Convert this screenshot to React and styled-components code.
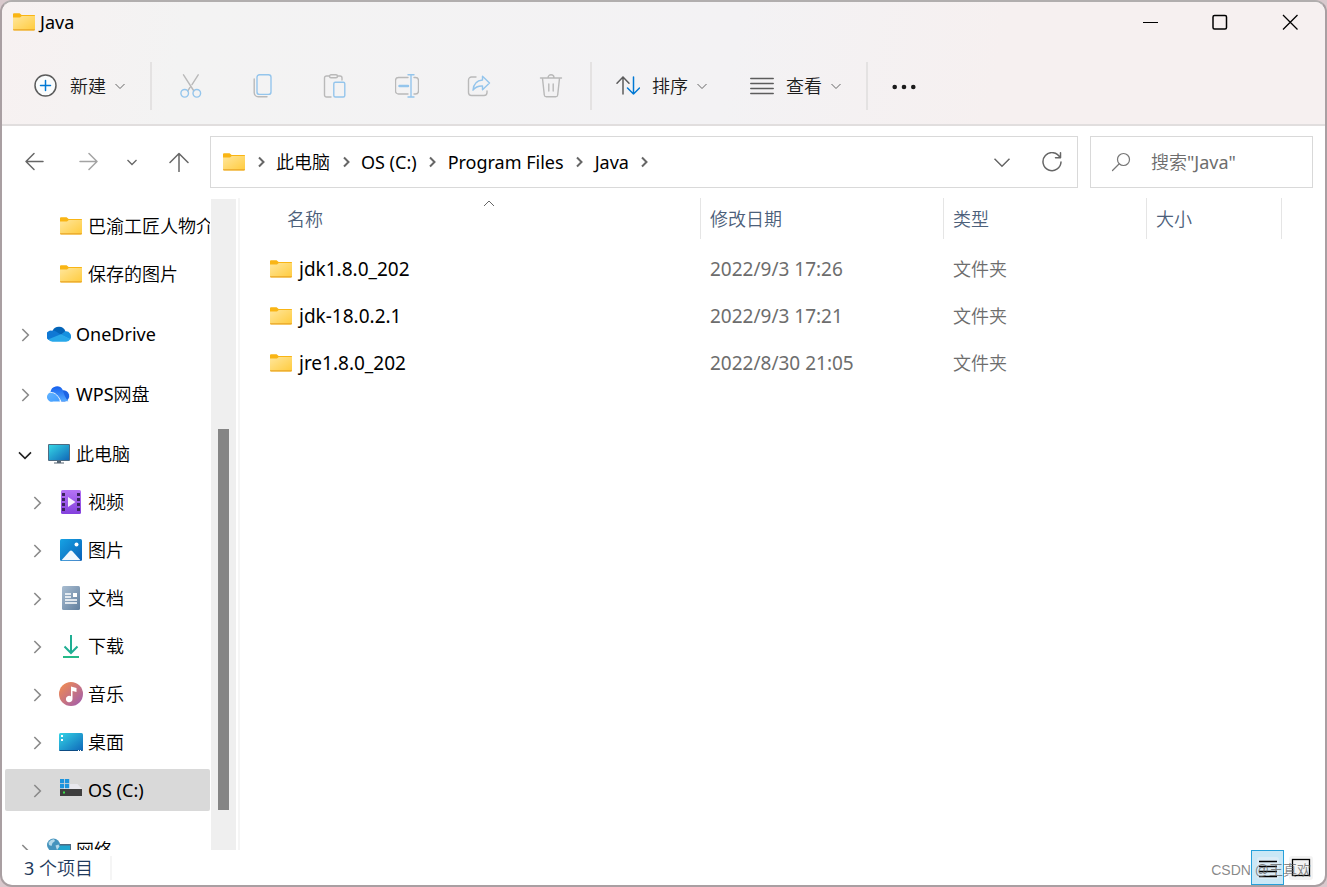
import React, { useId } from 'react'
import styled, { createGlobalStyle, css } from 'styled-components'

const GlobalStyle = createGlobalStyle`
	* {
		box-sizing: border-box;
	}
	body {
		margin: 0;
		background: #d9c9cd;
		font-family: 'Noto Sans', 'Noto Sans CJK SC DemiLight', 'Noto Sans CJK SC Light', 'Noto Sans CJK SC', sans-serif;
		font-size: 18px;
		line-height: 24px;
		color: #000;
	}
	button,
	input {
		font: inherit;
		color: inherit;
		border: 0;
		padding: 0;
		margin: 0;
		background: none;
	}
	svg {
		display: block;
		flex: none;
	}
`
const Window = styled.div`
	position: relative;
	display: flex;
	flex-direction: column;
	height: 100vh;
	overflow: hidden;
	border: 2px solid #a99fa2;
	border-top-color: #b1aeae;
	border-radius: 12px;
	background: #fff;
`
const Head = styled.header`
	flex: none;
	background: linear-gradient(100deg, #f7f1f1 0%, #f3f3f3 14%, #f3f2f4 55%, #f6f0f0 75%);
	border-bottom: 2px solid #e1dede;
`
const TitleBar = styled.div`
	display: flex;
	align-items: center;
	height: 40px;
	padding-left: 11px;
	margin-bottom: 6px;
`
const Title = styled.h1`
	flex: 1;
	margin: 0 0 0 5px;
	font-size: 18px;
	font-weight: 400;
`
const CaptionButton = styled.button`
	display: flex;
	align-items: center;
	justify-content: center;
	width: 70px;
	height: 40px;
`
const ToolBar = styled.div`
	display: flex;
	align-items: center;
	height: 76px;
	padding-left: 11px;
`
const ToolButton = styled.button`
	display: flex;
	align-items: center;
	gap: 12px;
	height: 48px;
	padding: 0 21px;
	color: #1b1b1b;
`
const IconButton = styled.button`
	display: flex;
	align-items: center;
	justify-content: center;
	width: 72px;
	height: 48px;
`
const ToolLabel = styled.span`
	display: flex;
	align-items: center;
	gap: 8px;
`
const Separator = styled.span`
	width: 2px;
	height: 48px;
	margin: 0 3px;
	background: #e4e2e2;
`
const NavRow = styled.div`
	display: flex;
	flex: none;
	padding: 10px 12px 10px 0;
`
const NavButtons = styled.nav`
	display: flex;
	align-items: center;
	width: 208px;
	padding-left: 5px;
`
const NavButton = styled.button`
	display: flex;
	align-items: center;
	justify-content: center;
	width: ${(props) => (props.$narrow ? '34px' : '54px')};
	height: 52px;
	&:last-child {
		margin-left: 3px;
	}
`
const AddressBar = styled.div`
	display: flex;
	align-items: center;
	flex: 1;
	height: 52px;
	padding-left: 12px;
	border: 1px solid #d9d9d9;
`
const Crumbs = styled.ol`
	display: flex;
	align-items: center;
	flex: 1;
	margin: 0;
	padding: 0;
	list-style: none;
`
const Crumb = styled.li`
	display: flex;
	align-items: center;
`
const CrumbLink = styled.a`
	color: #000;
	text-decoration: none;
	white-space: nowrap;
`
const CrumbArrow = styled.span`
	display: flex;
	justify-content: center;
	width: 31px;
`
const AddressButton = styled.button`
	display: flex;
	align-items: center;
	justify-content: center;
	width: 50px;
	height: 50px;
`
const SearchBox = styled.label`
	display: flex;
	align-items: center;
	gap: 20px;
	width: 223px;
	height: 52px;
	margin-left: 12px;
	padding-left: 20px;
	border: 1px solid #d9d9d9;
`
const SearchInput = styled.input`
	flex: 1;
	min-width: 0;
	outline: 0;
	&::placeholder {
		color: #6d6d6d;
		opacity: 1;
	}
`
const Body = styled.div`
	display: flex;
	flex: 1;
	min-height: 0;
`
const Sidebar = styled.aside`
	flex: none;
	width: 208px;
	padding: 4px 0 0 3px;
	overflow: hidden;
`
const Tree = styled.ul`
	margin: 0;
	padding: 0;
	list-style: none;
`
const TreeItem = styled.li`
	height: 48px;
	padding: 3px 0;
	margin-top: ${(props) => (props.$root ? '12px' : '0')};
`
const TreeRow = styled.div`
	display: flex;
	align-items: center;
	height: 42px;
	padding-left: ${(props) => (props.$root ? '8px' : '20px')};
	border-radius: 2px;
	white-space: nowrap;
	${(props) =>
		props.$selected &&
		css`
			background: #d9d9d9;
		`}
`
const Expander = styled.button`
	display: flex;
	flex: none;
	align-items: center;
	justify-content: center;
	width: 23px;
	height: 24px;
	margin: 2px 11px 0 0;
`
const ExpanderSpace = styled.span`
	flex: none;
	width: 34px;
`
const TreeLink = styled.a`
	display: flex;
	flex: none;
	align-items: center;
	gap: 5px;
	color: #000;
	text-decoration: none;
`
const TreeIcon = styled.span`
	display: flex;
	justify-content: center;
	width: 24px;
`
const ScrollTrack = styled.div`
	flex: none;
	display: flex;
	flex-direction: column;
	align-items: center;
	width: 25px;
	margin: 1px 2px 0 1px;
	padding: 230px 0 40px;
	background: #efefef;
`
const ScrollThumb = styled.div`
	flex: 1;
	width: 11px;
	background: #858585;
`
const Content = styled.main`
	flex: 1;
	min-width: 0;
	border-left: 2px solid #f5f5f5;
	overflow: hidden;
`
const FileTable = styled.table`
	width: 100%;
	table-layout: fixed;
	border-collapse: collapse;
`
const Column = styled.col`
	width: ${(props) => props.$width};
`
const HeadCell = styled.th`
	height: 47px;
	padding: 0;
	padding-left: ${(props) => (props.$first ? '38px' : '0')};
	vertical-align: top;
	font-weight: 400;
`
const SortButton = styled.button`
	position: relative;
	display: block;
	width: 100%;
	height: 41px;
	padding-left: 9px;
	border-right: 1px solid #e5e5e5;
	color: #4c607a;
	text-align: left;
`
const SortMark = styled.span`
	position: absolute;
	top: 0;
	left: 50%;
	margin-left: -6px;
`
const Cell = styled.td`
	height: 47px;
	padding: 0 0 0 9px;
	color: #6d6d6d;
	font-size: ${(props) => (props.$date ? '19px' : '18px')};
`
const NameCell = styled.td`
	height: 47px;
	padding: 0 0 0 30px;
	font-size: 19px;
`
const FileName = styled.a`
	display: flex;
	align-items: center;
	gap: 7px;
	color: #000;
	text-decoration: none;
`
const StatusBar = styled.footer`
	display: flex;
	align-items: center;
	flex: none;
	height: 35px;
	padding-left: 22px;
	padding-right: 8px;
`
const StatusText = styled.span`
	flex: 1;
	color: #1e395b;
`
const StatusCount = styled.span`
	padding-right: 17px;
	border-right: 2px solid #f5f5f5;
`
const ViewButton = styled.button`
	display: flex;
	align-items: center;
	justify-content: center;
	width: 33px;
	height: 35px;
	border: 1px solid ${(props) => (props.$active ? '#26a0da' : 'transparent')};
	background: ${(props) => (props.$active ? '#cbe8f6' : 'none')};
`
const Watermark = styled.span`
	position: absolute;
	right: 14px;
	bottom: 3px;
	color: rgba(90, 90, 90, 0.72);
	font-family: 'Liberation Sans', 'Noto Sans CJK SC', sans-serif;
	font-size: 14px;
`

const FolderIcon = () => {
	const id = useId()
	return (
		<svg width='22' height='18' viewBox='0 0 22 18'>
			<defs>
				<linearGradient id={id} x1='0' y1='0' x2='1' y2='1'>
					<stop offset='0' stopColor='#ffe69b' />
					<stop offset='1' stopColor='#ffcb3d' />
				</linearGradient>
			</defs>
			<path d='M0 1.2Q0 .3 1 .3H6.6L8.6 2H21.4Q22 2 22 2.6V5H0z' fill='#f9b515' />
			<path d='M0 4.4H7L8.8 3H22V16.6Q22 17.4 21 17.4H1Q0 17.4 0 16.6z' fill={`url(#${id})`} />
			<path d='M0 16.3H22Q22 17.5 21 17.5H1Q0 17.5 0 16.3z' fill='#e9a526' />
		</svg>
	)
}

const Chevron = ({ size = 12, color = '#666', dir = 'down', weight = 1.2 }) => {
	const paths = {
		down: 'M1.5 4 6 8.5 10.5 4',
		up: 'M1 8 6 3 11 8',
		right: 'M4 1.5 8.5 6 4 10.5'
	}
	return (
		<svg width={size} height={size} viewBox='0 0 12 12' fill='none' stroke={color} strokeWidth={weight}>
			<path d={paths[dir]} />
		</svg>
	)
}

const Line = ({ size = 24, stroke = '#5c5c5c', width = 1.5, children }) => (
	<svg
		width={size}
		height={size}
		viewBox={`0 0 ${size} ${size}`}
		fill='none'
		stroke={stroke}
		strokeWidth={width}
		strokeLinecap='round'
		strokeLinejoin='round'
	>
		{children}
	</svg>
)

const GRAY = '#b9b9b9'
const BLUE = '#94c5ec'

const NewIcon = () => (
	<Line>
		<circle cx='11.5' cy='11.5' r='10.5' fill='#fafcfd' />
		<path d='M11.5 6.5v10M6.5 11.5h10' stroke='#0078d4' />
	</Line>
)
const CutIcon = () => (
	<Line stroke={GRAY} width={1.4}>
		<path d='M4.5 .8 14.9 17M19.2 .8 13 10.6M11 13.4 8.7 17' />
		<circle cx='5.7' cy='19.3' r='3.8' stroke={BLUE} />
		<circle cx='17.8' cy='19.3' r='3.8' stroke={BLUE} />
	</Line>
)
const CopyIcon = () => (
	<Line stroke={GRAY} width={1.4}>
		<path d='M3.2 5v13.8a4 4 0 0 0 4 4H16' />
		<rect x='6' y='.8' width='14' height='19.6' rx='2.5' stroke={BLUE} />
	</Line>
)
const PasteIcon = () => (
	<Line stroke={GRAY} width={1.4}>
		<path d='M8 23H3.5a2 2 0 0 1-2-2V4a2 2 0 0 1 2-2h3M14.5 2H17a2 2 0 0 1 2 2v2' />
		<rect x='6.5' y='.7' width='8' height='3' rx='1.5' />
		<rect x='10.8' y='8.2' width='11' height='14.8' rx='1.5' stroke={BLUE} />
	</Line>
)
const RenameIcon = () => (
	<Line stroke={GRAY} width={1.4}>
		<path d='M13 3.5H3.5a3 3 0 0 0-3 3V17a3 3 0 0 0 3 3H13M19 3.5h1.5a3 3 0 0 1 3 3V17a3 3 0 0 1-3 3H19' />
		<path d='M16 .8v22M13 .8h6M13 23h6' stroke={BLUE} />
		<path d='M4.5 12h8.5' stroke={BLUE} strokeWidth='2.5' />
	</Line>
)
const ShareIcon = () => (
	<Line stroke={GRAY} width={1.4}>
		<path d='M9 3H4.5a3 3 0 0 0-3 3v12.5a3 3 0 0 0 3 3H17a3 3 0 0 0 3-3V17' />
		<path d='M15.5 2.2 22.5 9l-7 6.800V12c-4.2-.2-7.3 1.3-9.5 4.2C6.5 10.5 9.8 6.5 15.5 6z' stroke={BLUE} />
	</Line>
)
const DeleteIcon = () => (
	<Line stroke={GRAY} width={1.4}>
		<path d='M1.5 4h21M3.5 4.3 5.3 21a2 2 0 0 0 2 1.8h9.4a2 2 0 0 0 2-1.8L20.5 4.3M9 3.8a3 3 0 0 1 6 0M9.8 10v7M14.2 10v7' />
	</Line>
)
const SortIcon = () => (
	<Line>
		<path d='M7 20V3M1 9.2 7 3l6 6.2' />
		<path d='M17.5 3v17M11.5 14l6 6 6-6' stroke='#0078d4' />
	</Line>
)
const ViewIcon = () => (
	<Line>
		<path d='M.8 4.5h22.4M.8 9.5h22.4M.8 14.5h22.4M.8 19.5h22.4' />
	</Line>
)
const MoreIcon = () => (
	<svg width='24' height='24' viewBox='0 0 24 24' fill='#1b1b1b'>
		<circle cx='2.7' cy='13' r='2.3' />
		<circle cx='12' cy='13' r='2.3' />
		<circle cx='21.3' cy='13' r='2.3' />
	</svg>
)

const OneDriveIcon = () => (
	<svg width='24' height='24' viewBox='0 0 24 24'>
		<path d='M5.5 9A7 7 0 0 1 18.5 9.5L13 14z' fill='#0364b8' />
		<path d='M5 8.7a5.6 5.6 0 0 1 4 .8L17 14.5 3 18.5A5 5 0 0 1 5 8.7z' fill='#0f78d4' />
		<path d='M18 9.3a5.3 5.3 0 0 1 5.2 8.2L14 13z' fill='#1490df' />
		<path d='M1.500 17.2 13.8 12.3 23.5 17A5 5 0 0 1 19 19.7H5.5A5 5 0 0 1 1.5 17.2z' fill='#28a8ea' />
	</svg>
)
const WpsIcon = () => (
	<svg width='24' height='24' viewBox='0 0 24 24'>
		<defs>
			<linearGradient id='wps-a' x1='0' y1='0' x2='0' y2='1'>
				<stop offset='0' stopColor='#1660ee' />
				<stop offset='1' stopColor='#54a9ff' />
			</linearGradient>
			<linearGradient id='wps-b' x1='0' y1='0' x2='1' y2='1'>
				<stop offset='0' stopColor='#64b4ff' />
				<stop offset='1' stopColor='#3f9bff' />
			</linearGradient>
		</defs>
		<path d='M15 8.5a5.6 5.6 0 1 1 3 11H14z' fill='#1c63e4' />
		<path d='M3.5 10A6.5 6.5 0 0 1 15.5 7.500C17 12 18 16 21.5 19.2H14z' fill='url(#wps-a)' />
		<path d='M3 10.6C8 10 11 14 13 19.5H6A4.7 4.7 0 0 1 3 10.6z' fill='url(#wps-b)' />
		<path d='M3.5 10.5C8.5 10 11.5 14.5 14 19.5' fill='none' stroke='#e5f2ff' strokeWidth='1' />
	</svg>
)
const PcIcon = () => (
	<svg width='24' height='24' viewBox='0 0 24 24'>
		<defs>
			<linearGradient id='pc' x1='0' y1='0' x2='1' y2='1'>
				<stop offset='0' stopColor='#35d5e5' />
				<stop offset='1' stopColor='#1068b8' />
			</linearGradient>
		</defs>
		<rect x='1' y='2' width='22' height='17' rx='1' fill='#4e6b82' />
		<rect x='2' y='3' width='20' height='15' fill='url(#pc)' />
		<path d='M10 19h4v1.500h3v1H7v-1h3z' fill='#566573' />
	</svg>
)
const VideoIcon = () => (
	<svg width='24' height='24' viewBox='0 0 24 24'>
		<defs>
			<linearGradient id='video' x1='0' y1='0' x2='0' y2='1'>
				<stop offset='0' stopColor='#b573f5' />
				<stop offset='1' stopColor='#8340dd' />
			</linearGradient>
		</defs>
		<rect x='2' y='0' width='20' height='24' rx='1.5' fill='url(#video)' />
		<path d='M4.5 3v19M19.5 3v19' stroke='#3d2460' strokeWidth='3' strokeDasharray='3 2' />
		<path d='M9 7v10l7.5-5z' fill='#f5effc' />
	</svg>
)
const PictureIcon = () => (
	<svg width='24' height='24' viewBox='0 0 24 24'>
		<defs>
			<linearGradient id='picture' x1='0' y1='0' x2='1' y2='1'>
				<stop offset='0' stopColor='#16a3e4' />
				<stop offset='1' stopColor='#0a5fb6' />
			</linearGradient>
		</defs>
		<rect x='1' y='1' width='22' height='22' rx='1.5' fill='url(#picture)' />
		<path d='M2.5 22.3 10.8 13a1.7 1.7 0 0 1 2.4 0l8.3 9.3z' fill='#f0f7fd' />
		<circle cx='17.5' cy='6.5' r='2' fill='#fff' />
	</svg>
)
const DocumentIcon = () => (
	<svg width='24' height='24' viewBox='0 0 24 24'>
		<defs>
			<linearGradient id='document' x1='0' y1='0' x2='1' y2='1'>
				<stop offset='0' stopColor='#a9bdd1' />
				<stop offset='1' stopColor='#617f9e' />
			</linearGradient>
		</defs>
		<rect x='3' y='0' width='18' height='24' rx='1.5' fill='url(#document)' />
		<path d='M6 8h6M6 11h6M6 14h12M6 17h12' stroke='#fff' strokeWidth='1.3' />
		<rect x='14' y='7' width='4' height='4' fill='#fff' />
	</svg>
)
const DownloadIcon = () => (
	<svg width='24' height='24' viewBox='0 0 24 24' fill='none' strokeWidth='2'>
		<path d='M12 1v18M5.5 12.5 12 19l6.5-6.5' stroke='#1fae93' />
		<path d='M4 23h16' stroke='#25b987' />
	</svg>
)
const MusicIcon = () => (
	<svg width='24' height='24' viewBox='0 0 24 24'>
		<defs>
			<linearGradient id='music' x1='0' y1='0' x2='1' y2='1'>
				<stop offset='.1' stopColor='#ee8a55' />
				<stop offset='.9' stopColor='#a55fa8' />
			</linearGradient>
		</defs>
		<circle cx='12' cy='12' r='12' fill='url(#music)' />
		<path d='M12 4.500 17.5 6v4L13.5 9v8a3.3 3.3 0 1 1-1.5-2.7z' fill='#fff' />
	</svg>
)
const DesktopIcon = () => (
	<svg width='24' height='24' viewBox='0 0 24 24'>
		<defs>
			<linearGradient id='desktop' x1='0' y1='0' x2='1' y2='1'>
				<stop offset='0' stopColor='#33d4e6' />
				<stop offset='1' stopColor='#0f66b9' />
			</linearGradient>
		</defs>
		<rect x='0' y='3' width='24' height='18' rx='1.5' fill='url(#desktop)' />
		<path d='M.5 20.5h23' stroke='#0d4c84' />
		<path d='M2 5h2v2H2zM2 9h2v2H2zM19 20h1v1h-1zM21 20h1v1h-1z' fill='#fff' />
	</svg>
)
const DriveIcon = () => (
	<svg width='24' height='24' viewBox='0 0 24 24'>
		<path d='M4 11 7 6H18.5L23 11z' fill='#e8e8ee' />
		<rect x='1' y='11' width='22' height='7' fill='#3e3e3e' />
		<rect x='4' y='13.5' width='2' height='2' fill='#3be04a' />
		<path d='M1 1h4.2v4.2H1zM6 1h4.2v4.2H6zM1 6h4.2v4.2H1zM6 6h4.2v4.2H6z' fill='#1c94dd' />
	</svg>
)
const NetworkIcon = () => (
	<svg width='24' height='24' viewBox='0 0 24 24'>
		<rect x='7' y='6' width='17' height='13' fill='#4e6b82' />
		<rect x='8' y='7.5' width='15' height='10.5' fill='#22a6cf' />
		<circle cx='6.5' cy='7' r='6.5' fill='#4593bd' />
		<path d='M1.5 4.500Q4 1 7 1.2L8 3 5.5 5 4.5 8 2 7zM8.5 7.5l3-1 1 2-2.5 3.5z' fill='#b5d9ea' />
	</svg>
)

const toolIcons = [
	{ label: '剪切', icon: CutIcon },
	{ label: '复制', icon: CopyIcon },
	{ label: '粘贴', icon: PasteIcon },
	{ label: '重命名', icon: RenameIcon },
	{ label: '共享', icon: ShareIcon },
	{ label: '删除', icon: DeleteIcon }
]

const crumbs = ['此电脑', 'OS (C:)', 'Program Files', 'Java']

const treeItems = [
	{ name: '巴渝工匠人物介', icon: FolderIcon, leaf: true },
	{ name: '保存的图片', icon: FolderIcon, leaf: true },
	{ name: 'OneDrive', icon: OneDriveIcon, root: true },
	{ name: 'WPS网盘', icon: WpsIcon, root: true },
	{ name: '此电脑', icon: PcIcon, root: true, open: true },
	{ name: '视频', icon: VideoIcon },
	{ name: '图片', icon: PictureIcon },
	{ name: '文档', icon: DocumentIcon },
	{ name: '下载', icon: DownloadIcon },
	{ name: '音乐', icon: MusicIcon },
	{ name: '桌面', icon: DesktopIcon },
	{ name: 'OS (C:)', icon: DriveIcon, selected: true },
	{ name: '网络', icon: NetworkIcon, root: true }
]

const columns = [
	{ name: '名称', width: '461px', sorted: true },
	{ name: '修改日期', width: '243px' },
	{ name: '类型', width: '203px' },
	{ name: '大小', width: '135px' }
]

const files = [
	{ name: 'jdk1.8.0_202', date: '2022/9/3 17:26', type: '文件夹' },
	{ name: 'jdk-18.0.2.1', date: '2022/9/3 17:21', type: '文件夹' },
	{ name: 'jre1.8.0_202', date: '2022/8/30 21:05', type: '文件夹' }
]

const WindowHead = () => (
	<Head>
		<TitleBar>
			<FolderIcon />
			<Title>Java</Title>
			<CaptionButton aria-label='最小化'>
				<svg width='16' height='16' stroke='#000'>
					<path d='M1 8.5h15' />
				</svg>
			</CaptionButton>
			<CaptionButton aria-label='最大化'>
				<svg width='16' height='16' fill='none' stroke='#000' strokeWidth='1.5'>
					<rect x='1' y='1.5' width='13.5' height='13.5' rx='1.5' />
				</svg>
			</CaptionButton>
			<CaptionButton aria-label='关闭'>
				<svg width='16' height='16' stroke='#000' strokeWidth='1.3'>
					<path d='M1 1l14.500 14.500M15.5 1l-14.500 14.500' />
				</svg>
			</CaptionButton>
		</TitleBar>
		<ToolBar>
			<ToolButton>
				<NewIcon />
				<ToolLabel>
					新建 <Chevron weight={1} />
				</ToolLabel>
			</ToolButton>
			<Separator />
			{toolIcons.map(({ label, icon: Icon }) => (
				<IconButton key={label} aria-label={label}>
					<Icon />
				</IconButton>
			))}
			<Separator />
			<ToolButton>
				<SortIcon />
				<ToolLabel>
					排序 <Chevron weight={1} />
				</ToolLabel>
			</ToolButton>
			<ToolButton>
				<ViewIcon />
				<ToolLabel>
					查看 <Chevron weight={1} />
				</ToolLabel>
			</ToolButton>
			<Separator />
			<ToolButton aria-label='更多'>
				<MoreIcon />
			</ToolButton>
		</ToolBar>
	</Head>
)

const Navigation = () => (
	<NavRow>
		<NavButtons>
			<NavButton aria-label='后退'>
				<Line size={20} stroke='#666'>
					<path d='M19 9.5H2M10 1.5 2 9.5l8 8' />
				</Line>
			</NavButton>
			<NavButton aria-label='前进'>
				<Line size={20} stroke='#a3a3a3'>
					<path d='M2 9.5h17M11 1.5l8 8-8 8' />
				</Line>
			</NavButton>
			<NavButton $narrow aria-label='最近浏览的位置'>
				<Chevron weight={1.3} />
			</NavButton>
			<NavButton aria-label='上移'>
				<Line size={20} stroke='#666'>
					<path d='M10 19.5V1.8M1 10.5 10 1.5l9 9' />
				</Line>
			</NavButton>
		</NavButtons>
		<AddressBar>
			<FolderIcon />
			<Crumbs>
				<CrumbArrow>
					<Chevron dir='right' weight={2} />
				</CrumbArrow>
				{crumbs.map((name) => (
					<Crumb key={name}>
						<CrumbLink href='#'>{name}</CrumbLink>
						<CrumbArrow>
							<Chevron dir='right' weight={2} />
						</CrumbArrow>
					</Crumb>
				))}
			</Crumbs>
			<AddressButton aria-label='历史记录'>
				<Chevron size={20} weight={0.9} />
			</AddressButton>
			<AddressButton aria-label='刷新'>
				<Line size={20} stroke='#666'>
					<path d='M18 5.5A9 9 0 1 0 19 10M18.5 .8v5h-5' />
				</Line>
			</AddressButton>
		</AddressBar>
		<SearchBox>
			<Line size={20} stroke='#777' width={1.2}>
				<circle cx='12.5' cy='7.5' r='6' />
				<path d='M8 12 1.5 18.5' />
			</Line>
			<SearchInput type='text' aria-label='搜索' placeholder='搜索"Java"' />
		</SearchBox>
	</NavRow>
)

const FolderTree = () => (
	<Sidebar>
		<Tree>
			{treeItems.map(({ name, icon: Icon, root, leaf, open, selected }) => (
				<TreeItem key={name} $root={root}>
					<TreeRow $root={root} $selected={selected}>
						{leaf ? (
							<ExpanderSpace />
						) : (
							<Expander aria-label={`展开 ${name}`}>
								<Chevron
									size={16}
									dir={open ? 'down' : 'right'}
									color={open ? '#222' : '#8a8a8a'}
								/>
							</Expander>
						)}
						<TreeLink href='#'>
							<TreeIcon>
								<Icon />
							</TreeIcon>
							{name}
						</TreeLink>
					</TreeRow>
				</TreeItem>
			))}
		</Tree>
	</Sidebar>
)

const FileList = () => (
	<Content>
		<FileTable>
			<colgroup>
				{columns.map((column) => (
					<Column key={column.name} $width={column.width} />
				))}
				<Column />
			</colgroup>
			<thead>
				<tr>
					{columns.map((column) => (
						<HeadCell key={column.name} $first={column.sorted}>
							<SortButton>
								{column.name}
								{column.sorted && (
									<SortMark>
										<Chevron dir='up' weight={1} />
									</SortMark>
								)}
							</SortButton>
						</HeadCell>
					))}
					<td />
				</tr>
			</thead>
			<tbody>
				{files.map((file) => (
					<tr key={file.name}>
						<NameCell>
							<FileName href='#'>
								<FolderIcon />
								{file.name}
							</FileName>
						</NameCell>
						<Cell $date>{file.date}</Cell>
						<Cell>{file.type}</Cell>
						<Cell />
						<td />
					</tr>
				))}
			</tbody>
		</FileTable>
	</Content>
)

const Status = () => (
	<StatusBar>
		<StatusText>
			<StatusCount>3 个项目</StatusCount>
		</StatusText>
		<ViewButton $active aria-label='详细信息'>
			<svg width='22' height='22' stroke='#000' strokeWidth='1.3'>
				<rect width='22' height='22' rx='3' fill='#dcecf6' stroke='none' />
				<path d='M2 4.5h18M2 9.5h18M2 14.5h18M2 19.5h18' />
			</svg>
		</ViewButton>
		<ViewButton aria-label='大图标'>
			<svg width='24' height='24' fill='none' stroke='#000' strokeWidth='1.3'>
				<rect width='24' height='24' rx='3' fill='#f3f3f3' stroke='none' />
				<rect x='3.5' y='3.5' width='17' height='16' />
			</svg>
		</ViewButton>
	</StatusBar>
)

const App = () => {
	return (
		<>
			<GlobalStyle />
			<Window>
				<WindowHead />
				<Navigation />
				<Body>
					<FolderTree />
					<ScrollTrack>
						<ScrollThumb />
					</ScrollTrack>
					<FileList />
				</Body>
				<Status />
				<Watermark>CSDN @王真欢</Watermark>
			</Window>
		</>
	)
}

export default App
